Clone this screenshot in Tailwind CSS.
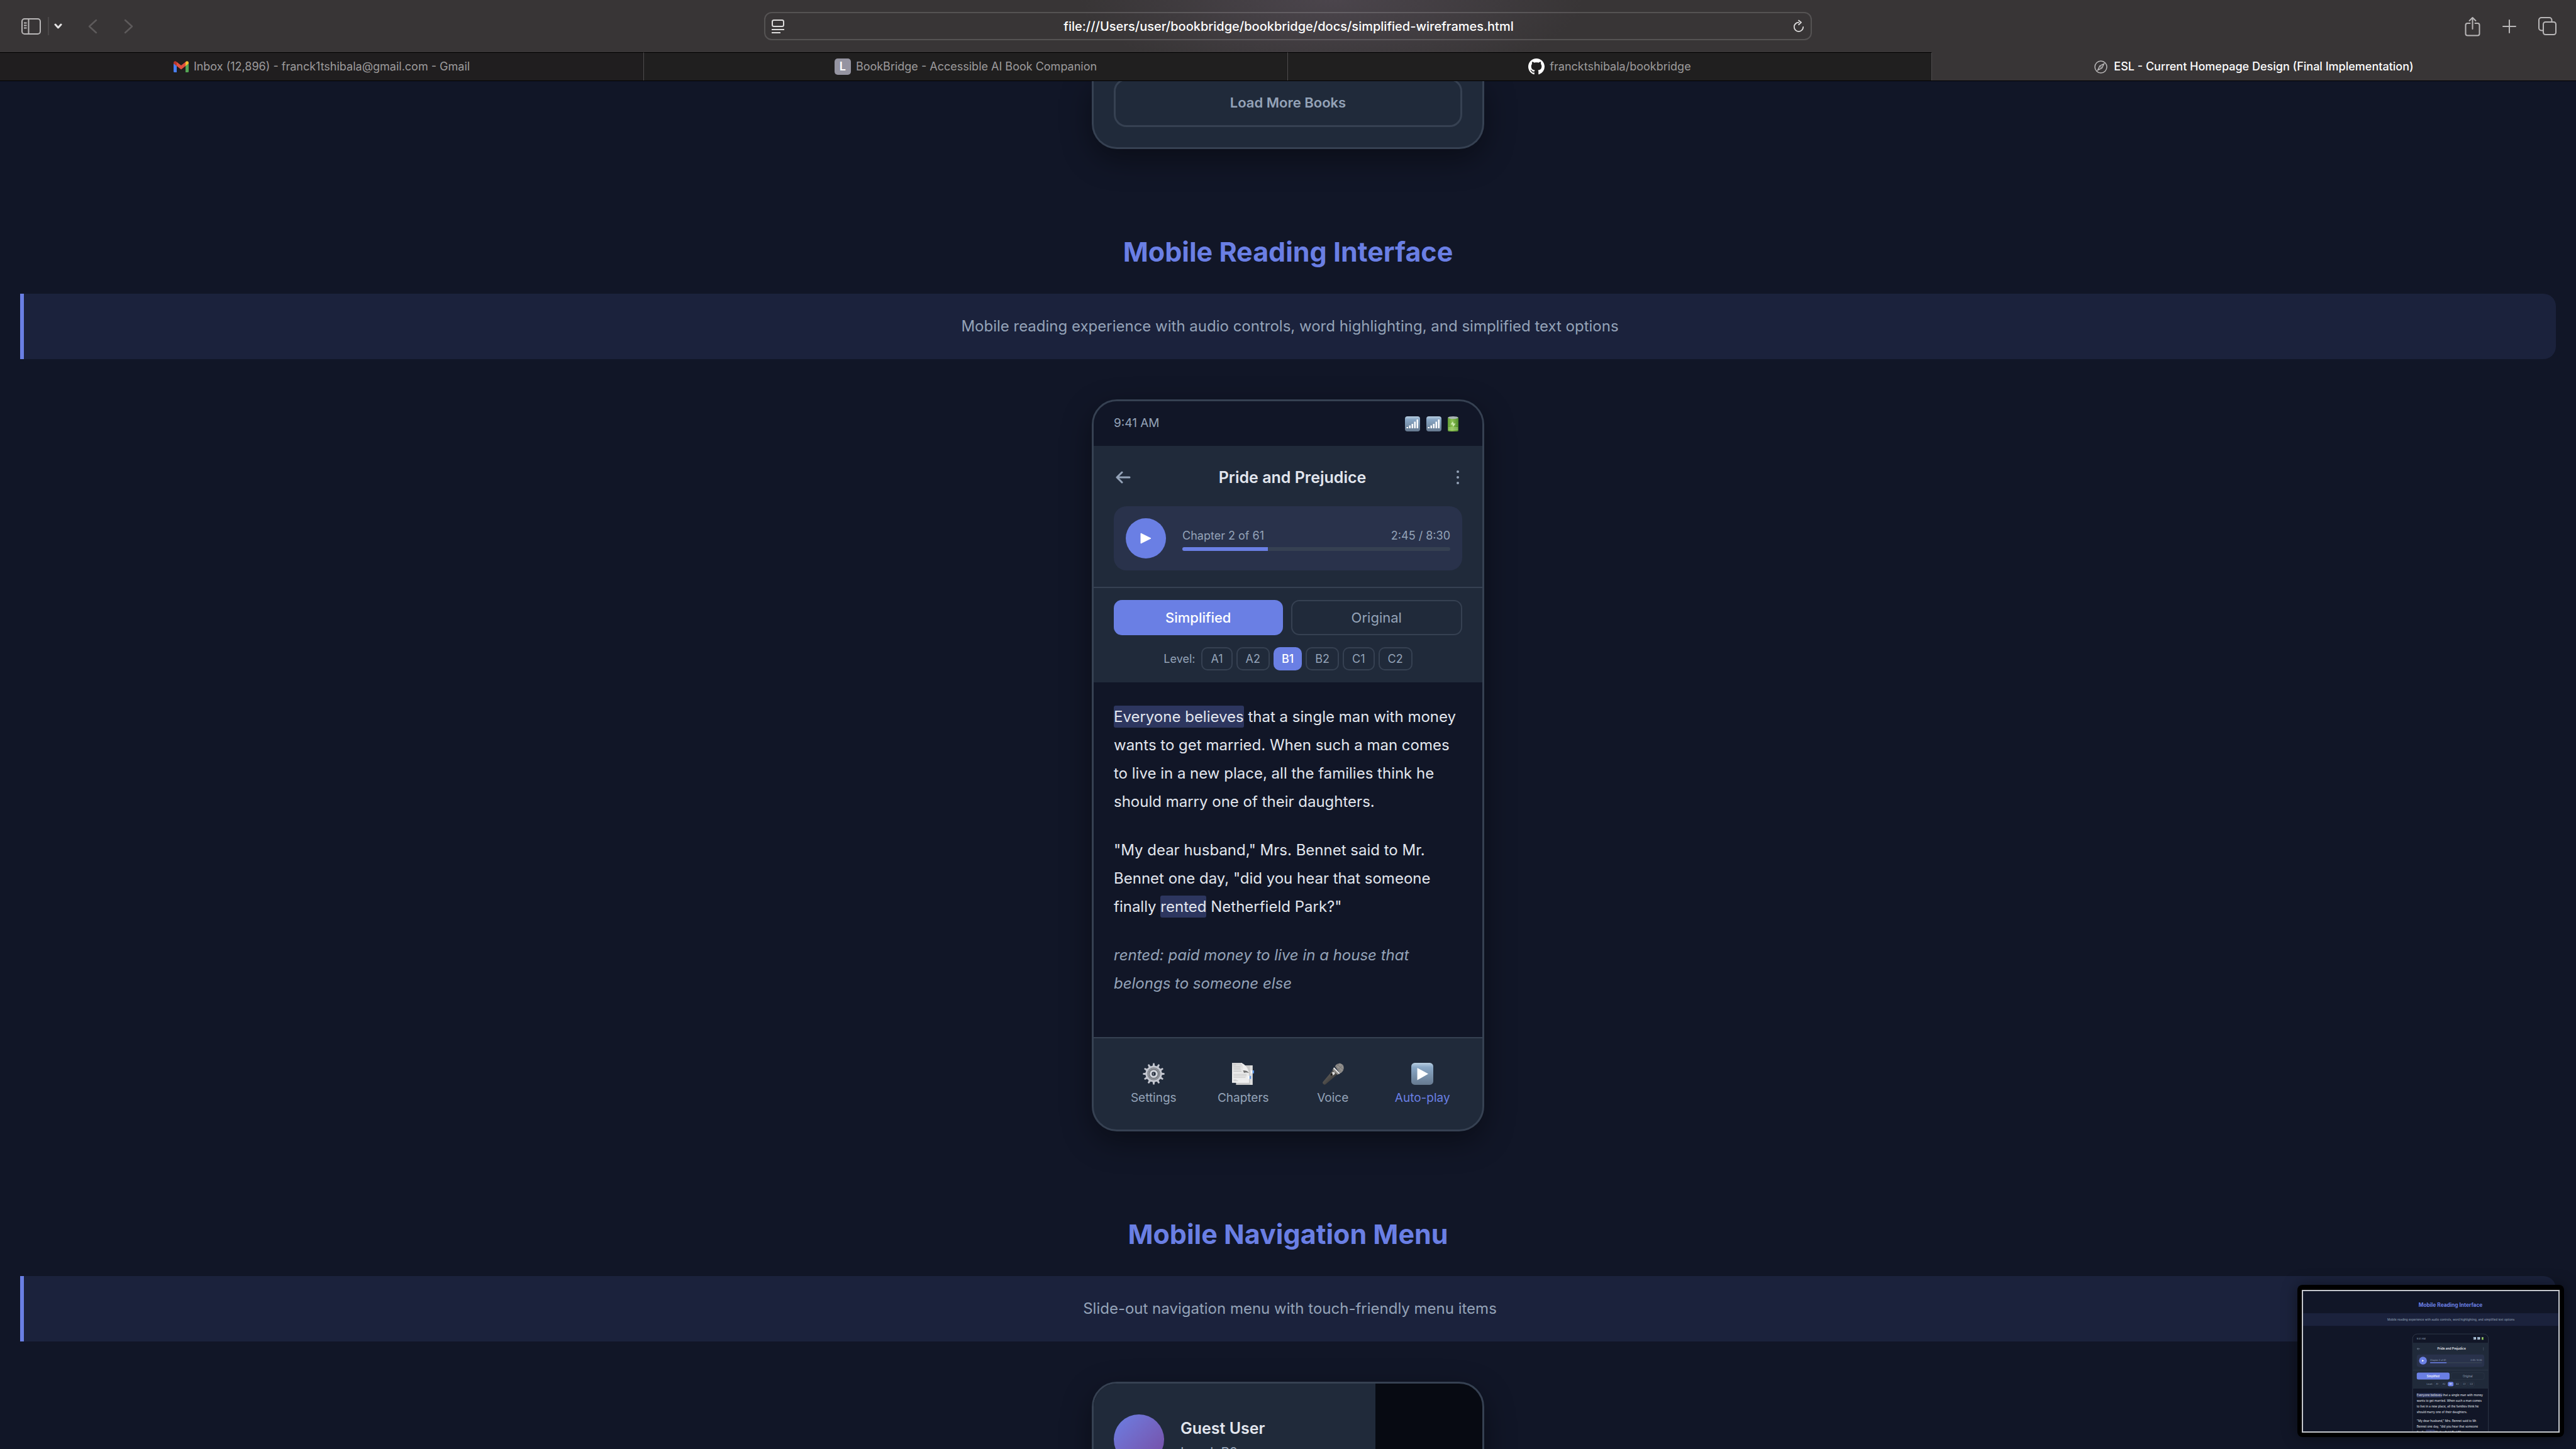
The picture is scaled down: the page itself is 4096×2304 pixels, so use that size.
<!DOCTYPE html>
<html lang="en">
<head>
<meta charset="utf-8">
<meta name="viewport" content="width=device-width, initial-scale=1">
<title>ESL - Current Homepage Design (Final Implementation)</title>
<script src="https://cdn.jsdelivr.net/npm/@tailwindcss/browser@4"></script>
</head>
<body class="flex h-screen flex-col overflow-hidden bg-[#111627] font-['Inter',sans-serif] text-[#e2e6ee]">

<!-- Shared drawings -->
<svg width="0" height="0" class="absolute" aria-hidden="true">
  <defs>
    <linearGradient id="tile" x1="0" y1="0" x2="0" y2="1">
      <stop offset="0" stop-color="#b9cfe2"/><stop offset=".2" stop-color="#8aa8c6"/><stop offset="1" stop-color="#66798f"/>
    </linearGradient>
    <linearGradient id="cell" x1="0" y1="0" x2="1" y2="0">
      <stop offset="0" stop-color="#5f9a35"/><stop offset=".4" stop-color="#8cc152"/><stop offset="1" stop-color="#4f8a2c"/>
    </linearGradient>
    <linearGradient id="paper" x1="0" y1="0" x2="0" y2="1">
      <stop offset="0" stop-color="#d4d4d4"/><stop offset=".3" stop-color="#e6e6e6"/><stop offset="1" stop-color="#f0f0f0"/>
    </linearGradient>
    <linearGradient id="handle" x1="0" y1="0" x2="1" y2="1">
      <stop offset="0" stop-color="#777470"/><stop offset="1" stop-color="#242322"/>
    </linearGradient>
    <symbol id="signal" viewBox="0 0 24 24">
      <rect width="24" height="24" rx="4" fill="url(#tile)"/>
      <path d="M2.500 17h2.500v2h-2.500zM6.500 14.500h2.500v4.500h-2.500zM10.500 12h2.500v7h-2.500zM14.500 8.500h2.500v10.500h-2.500zM18.500 5h2.500v14h-2.500z" fill="#fff"/>
    </symbol>
    <symbol id="battery" viewBox="0 0 17 24">
      <rect x="0" y="1" width="17" height="23" rx="2" fill="url(#cell)"/>
      <ellipse cx="8.500" cy="2" rx="8" ry="2" fill="#a9b3b5"/>
      <path d="M1 18.500h15M1 21h15" stroke="#b7dc8c" stroke-width="1"/>
      <path d="M8 8l-3.500 5h3l1 4 4-5.500h-3z" fill="#c9e6ac"/>
    </symbol>
  </defs>
</svg>

<!-- Browser chrome -->
<header class="shrink-0 bg-[#383536] bg-[radial-gradient(ellipse_400px_130px_at_51.700%_0px,#4b454c,#383536)]">
  <div class="grid h-[83px] grid-cols-[1fr_minmax(0,1666px)_1fr] items-center">
    <div class="flex items-center pl-[34px]">
      <button type="button" aria-label="Sidebar" class="block">
        <svg width="31" height="26" viewBox="0 0 31 26" fill="none" stroke="#b9b7b8" stroke-width="2"><rect x="1" y="1" width="29" height="24" rx="4"/><path d="M11.500 1v24M4 7.500h4.500M4 11.500h4.500M4 15.500h4.500"/></svg>
      </button>
      <span class="ml-[11px] h-[29px] w-[2px] bg-[#4a4748]"></span>
      <button type="button" aria-label="Tab groups" class="ml-2 block">
        <svg width="13" height="9" viewBox="0 0 13 9" fill="none" stroke="#e4e3e3" stroke-width="3" stroke-linecap="round" stroke-linejoin="round"><path d="M2 2l4.500 5L11 2"/></svg>
      </button>
      <button type="button" aria-label="Back" class="ml-[41px] block">
        <svg width="15" height="24" viewBox="0 0 15 24" fill="none" stroke="#5d5a5b" stroke-width="2.500" stroke-linecap="round" stroke-linejoin="round"><path d="M13 2L2 12l11 10"/></svg>
      </button>
      <button type="button" aria-label="Forward" class="ml-[42px] block">
        <svg width="15" height="24" viewBox="0 0 15 24" fill="none" stroke="#5d5a5b" stroke-width="2.500" stroke-linecap="round" stroke-linejoin="round"><path d="M2 2l11 10L2 22"/></svg>
      </button>
    </div>
    <div class="flex h-[45px] items-center rounded-xl border-2 border-white/15 px-[10px]">
      <button type="button" aria-label="Page menu" class="block">
        <svg width="20" height="22" viewBox="0 0 20 22" fill="none" stroke="#dddcdc" stroke-width="2"><rect x="1" y="1" width="18" height="10" rx="2.500"/><path d="M0 16h20M0 21h14"/></svg>
      </button>
      <input type="text" aria-label="Address" value="file:///Users/user/bookbridge/bookbridge/docs/simplified-wireframes.html" class="min-w-0 flex-1 bg-transparent text-center text-[20px] font-medium text-white outline-none">
      <button type="button" aria-label="Reload" class="block">
        <svg width="18" height="21" viewBox="0 0 20 22" fill="none" stroke="#dddcdc" stroke-width="2" stroke-linecap="round" stroke-linejoin="round"><path d="M10 4.500a8 8 0 1 0 8 8M10 1l4.500 3.500L10 8.500"/></svg>
      </button>
    </div>
    <div class="flex items-center justify-end gap-[35px] pr-[31px]">
      <button type="button" aria-label="Share" class="block">
        <svg width="25" height="32" viewBox="0 0 25 32" fill="none" stroke="#b9b7b8" stroke-width="2" stroke-linecap="round" stroke-linejoin="round"><path d="M8.500 11H4.500A3 3 0 0 0 1.500 14v13.500a3 3 0 0 0 3 3h16a3 3 0 0 0 3-3V14a3 3 0 0 0-3-3h-4M12.500 20V2.500M7.500 7l5-5 5 5"/></svg>
      </button>
      <button type="button" aria-label="New tab" class="block">
        <svg width="22" height="22" viewBox="0 0 22 22" fill="none" stroke="#b9b7b8" stroke-width="2" stroke-linecap="round"><path d="M11 1v20M1 11h20"/></svg>
      </button>
      <button type="button" aria-label="Tab overview" class="block">
        <svg width="29" height="29" viewBox="0 0 29 29" fill="none" stroke="#b9b7b8" stroke-width="2"><rect x="8" y="8" width="20" height="20" rx="3.500"/><path d="M8 21.500H5A4 4 0 0 1 1 17.500V5a4 4 0 0 1 4-4h12.500A4 4 0 0 1 21.500 5v3"/></svg>
      </button>
    </div>
  </div>
  <nav class="grid h-[46px] grid-cols-4 border-b border-black text-[18px] leading-6 text-[#9d9b9c]">
    <a href="#" class="flex items-center justify-center gap-2 border-t border-r border-t-black border-r-[#4e4c4d] bg-[#201e1f]">
      <svg width="24" height="18" viewBox="0 0 24 18"><path d="M0 4v12.500A1.500 1.500 0 0 0 1.500 18H5V7z" fill="#4a7ff0"/><path d="M24 4v12.500a1.500 1.500 0 0 1-1.500 1.500H19V7z" fill="#54a554"/><path d="M5 1.500l7 5.500 7-5.500V8l-7 5.500L5 8z" fill="#e0503f"/><path d="M19 1.500C21.500-.7 24 .5 24 3.500V4l-5 4z" fill="#f5bb2f"/><path d="M5 1.500C2.500-.7 0 .5 0 3.500V4l5 4z" fill="#b8362b"/></svg>
      <span>Inbox (12,896) - franck1tshibala@gmail.com - Gmail</span>
    </a>
    <a href="#" class="flex items-center justify-center gap-2 border-t border-r border-t-black border-r-[#4e4c4d] bg-[#201f1f]">
      <span class="grid size-[26px] place-items-center rounded-[5px] bg-[#9594a1] text-[18px] font-semibold text-white">L</span>
      <span>BookBridge - Accessible AI Book Companion</span>
    </a>
    <a href="#" class="flex items-center justify-center gap-2 border-t border-r border-t-black border-r-[#4e4c4d] bg-[#201f1f]">
      <svg width="26" height="26" viewBox="0 0 16 16" fill="#fff"><path d="M8 0C3.580 0 0 3.580 0 8c0 3.540 2.290 6.530 5.470 7.590.4.070.55-.17.55-.38 0-.19-.01-.82-.01-1.490-2.010.37-2.530-.49-2.690-.94-.09-.23-.48-.94-.82-1.130-.28-.15-.68-.52-.01-.53.63-.01 1.080.58 1.230.82.72 1.210 1.870.87 2.330.66.07-.52.28-.87.51-1.070-1.780-.2-3.640-.89-3.640-3.950 0-.87.31-1.590.82-2.150-.08-.2-.36-1.020.08-2.120 0 0 .67-.21 2.200.82.64-.18 1.320-.27 2-.27s1.360.09 2 .27c1.530-1.040 2.200-.82 2.200-.82.44 1.100.16 1.920.08 2.120.51.56.82 1.270.82 2.150 0 3.070-1.870 3.750-3.650 3.950.29.25.54.73.54 1.480 0 1.070-.01 1.930-.01 2.200 0 .21.15.46.55.38A8.010 8.010 0 0 0 16 8c0-4.420-3.580-8-8-8z"/></svg>
      <span>francktshibala/bookbridge</span>
    </a>
    <a href="#" aria-current="page" class="flex items-center justify-center gap-[10px] border-t border-transparent font-medium text-white">
      <svg width="21" height="21" viewBox="0 0 21 21" fill="none" stroke="#b9b7b8" stroke-width="1.500"><circle cx="10.500" cy="10.500" r="9.500"/><path d="M15.500 5.500l-3.300 6.700-6.700 3.300 3.300-6.700z"/><circle cx="10.500" cy="10.500" r="1" fill="#b9b7b8" stroke="none"/></svg>
      <span>ESL - Current Homepage Design (Final Implementation)</span>
    </a>
  </nav>
</header>

<main class="min-h-0 flex-1 overflow-hidden px-8">

  <!-- End of the library phone -->
  <section class="mx-auto w-[624px] rounded-b-[40px] border-x-3 border-b-3 border-[#364152] bg-[#202a3a] px-8 pb-8 shadow-[0_16px_48px_rgba(0,0,0,0.4)]">
    <button type="button" class="-mt-1 block h-[77px] w-full rounded-[20px] border-3 border-[#364152] text-[22px] font-semibold text-[#94a3b8]">Load More Books</button>
  </section>

  <!-- Mobile reading interface -->
  <section class="mt-[135px]">
    <h2 class="text-center text-[43px] leading-[56px] font-bold text-[#6a7fe4]">Mobile Reading Interface</h2>
    <p class="mt-[39px] flex h-[104px] items-center justify-center rounded-r-[20px] border-l-6 border-[#6a7fe4] bg-[#1b223c] text-[24px] text-[#94a3b8]">Mobile reading experience with audio controls, word highlighting, and simplified text options</p>

    <div class="mx-auto mt-16 w-[624px] overflow-hidden rounded-[40px] border-3 border-[#364152] bg-[#202a3a] shadow-[0_16px_48px_rgba(0,0,0,0.4)]">
      <div class="flex h-[71px] items-center justify-between bg-[#111627] px-8 text-[19px] text-[#94a3b8]">
        <span>9:41 AM</span>
        <span class="flex items-center gap-[10px] pr-[6px]">
          <svg width="24" height="24"><use href="#signal"/></svg>
          <svg width="24" height="24"><use href="#signal"/></svg>
          <svg width="17" height="24"><use href="#battery"/></svg>
        </span>
      </div>

      <div class="border-b-2 border-[#364152] px-8 pt-8 pb-[26px]">
        <div class="flex h-9 items-center justify-between">
          <button type="button" aria-label="Back to library" class="block w-[29px] pl-[3px]">
            <svg width="24" height="20" viewBox="0 0 24 20" fill="none" stroke="#94a3b8" stroke-width="3" stroke-linecap="round" stroke-linejoin="round"><path d="M10 2L2 10l8 8M2 10h20"/></svg>
          </button>
          <h3 class="text-[25px] leading-9 font-semibold">Pride and Prejudice</h3>
          <button type="button" aria-label="More" class="block w-[15px]">
            <svg width="15" height="24" viewBox="0 0 15 24" fill="#94a3b8"><circle cx="8" cy="3" r="2"/><circle cx="8" cy="12" r="2"/><circle cx="8" cy="21" r="2"/></svg>
          </button>
        </div>
        <div class="mt-7 flex h-[102px] items-center rounded-[20px] bg-[#29324b] px-[19px]">
          <button type="button" aria-label="Play" class="grid size-16 shrink-0 place-items-center rounded-full bg-[#6a7fe4]">
            <svg width="18" height="18" viewBox="0 0 18 18" fill="#fff" stroke="#fff" stroke-width="1" stroke-linejoin="round"><path d="M1 1v16L17 9z"/></svg>
          </button>
          <div class="ml-[26px] flex-1 pt-1">
            <div class="flex justify-between text-[18px] leading-6 text-[#94a3b8]"><span>Chapter 2 of 61</span><span>2:45 / 8:30</span></div>
            <div class="mt-[6px] h-[6px] overflow-hidden rounded-full bg-[#364152]"><div class="h-full bg-[#6a7fe4]" style="width:32%"></div></div>
          </div>
        </div>
      </div>

      <div class="px-8 py-[19px]">
        <div class="flex gap-[13px] text-[22px]">
          <button type="button" class="h-14 flex-1 rounded-[13px] bg-[#6a7fe4] font-medium text-white">Simplified</button>
          <button type="button" class="h-14 flex-1 rounded-[13px] border-2 border-[#364152] text-[#94a3b8]">Original</button>
        </div>
        <div class="mt-[19px] flex h-[37px] items-stretch justify-center gap-[6px] text-[18px] text-[#94a3b8]">
          <span class="mr-1 leading-[37px]">Level:</span>
          <button type="button" class="rounded-[10px] border-2 border-[#364152] px-[13px]">A1</button>
          <button type="button" class="rounded-[10px] border-2 border-[#364152] px-[13px]">A2</button>
          <button type="button" class="rounded-[10px] bg-[#6a7fe4] px-[13px] font-medium text-white">B1</button>
          <button type="button" class="rounded-[10px] border-2 border-[#364152] px-[13px]">B2</button>
          <button type="button" class="rounded-[10px] border-2 border-[#364152] px-[13px]">C1</button>
          <button type="button" class="rounded-[10px] border-2 border-[#364152] px-[13px]">C2</button>
        </div>
      </div>

      <article class="flex flex-col gap-8 bg-[#111627] px-8 pt-8 pb-[63px] text-[24px] leading-[45px] whitespace-nowrap">
        <p><mark class="rounded-[3px] bg-[#2d365f] py-[3px] text-inherit">Everyone believes</mark> that a single man with money<br>wants to get married. When such a man comes<br>to live in a new place, all the families think he<br>should marry one of their daughters.</p>
        <p>"My dear husband," Mrs. Bennet said to Mr.<br>Bennet one day, "did you hear that someone<br>finally <mark class="rounded-[3px] bg-[#2d365f] py-[3px] text-inherit">rented</mark> Netherfield Park?"</p>
        <p class="text-[#94a3b8] italic">rented: paid money to live in a house that<br>belongs to someone else</p>
      </article>

      <nav class="grid grid-cols-4 border-t-2 border-[#364152] px-6 pt-[39px] pb-[38px] text-[19px] leading-6 text-[#94a3b8]">
        <a href="#" class="flex flex-col items-center gap-[9px]">
          <svg width="35" height="35" viewBox="0 0 44 44">
            <defs><path id="tooth" d="M19.500 8l1-7.500h3l1 7.500z"/></defs>
            <g fill="#c3c6cf"><use href="#tooth"/><use href="#tooth" transform="rotate(30 22 22)"/><use href="#tooth" transform="rotate(60 22 22)"/><use href="#tooth" transform="rotate(90 22 22)"/><use href="#tooth" transform="rotate(120 22 22)"/><use href="#tooth" transform="rotate(150 22 22)"/><use href="#tooth" transform="rotate(180 22 22)"/><use href="#tooth" transform="rotate(210 22 22)"/><use href="#tooth" transform="rotate(240 22 22)"/><use href="#tooth" transform="rotate(270 22 22)"/><use href="#tooth" transform="rotate(300 22 22)"/><use href="#tooth" transform="rotate(330 22 22)"/><circle cx="22" cy="22" r="16.500"/></g>
            <circle cx="22" cy="22" r="13" fill="#83878f"/><circle cx="22" cy="22" r="10.500" fill="#70747b" stroke="#a7abb2" stroke-width="1"/>
            <circle cx="22" cy="22" r="6" fill="#202a3a" stroke="#d3d6de" stroke-width="4"/>
            <path d="M19 22l3 3.500 1-7z" fill="#787c84"/>
          </svg>Settings
        </a>
        <a href="#" class="flex flex-col items-center gap-[9px]">
          <svg width="35" height="35" viewBox="0 0 44 44">
            <path d="M8 5h33v39H8z" fill="#c9c9c9"/><path d="M36 5h5v39h-5z" fill="#dedede"/>
            <path d="M0 0h20c2 4 2 8 3 12l11 6v22H0z" fill="url(#paper)"/>
            <path d="M3 4h5M3 8h14M3 11h14M3 14h15M3 17h16M3 23h26M3 26h26M3 29h24M3 34h6M3 36h9" stroke="#bcbcbc" stroke-width="1"/>
            <path d="M17 0c7 1 15 9 17 20-3-4-7-5-12-5 1-6-1-12-5-15z" fill="#eeeeee"/>
            <path d="M22 15c5 0 9 1 12 5-4-1-8-1-10 0z" fill="#6f6f6f"/>
            <path d="M38 15h3v6h-3zM32 26h3v6h-3z" fill="#fff"/><path d="M41 15h3v6h-3zM35 26h3v6h-3z" fill="#5b95e6"/>
          </svg>Chapters
        </a>
        <a href="#" class="flex flex-col items-center gap-[9px]">
          <svg width="35" height="35" viewBox="0 0 44 44">
            <path d="M24 12l9 9L7 43c-3 2-7-2-5-5z" fill="url(#handle)"/>
            <path d="M24 9l12 12-5 3-10-10z" fill="#8d8a87"/>
            <path d="M23.500 10l11.500 11.500" stroke="#e8e8e8" stroke-width="2.500"/>
            <path d="M26 7C31-2 44 0 43.500 10c0 5-3 9-7 11z" fill="#918f8d"/>
            <path d="M30 3l13 11M27 7l12 11M36 0l-9 9M42 4L31 15" stroke="#6d6b69" stroke-width="1"/>
            <path d="M20 19l5-1 1 4-4 3z" fill="#dcdcdc"/><path d="M17 22l3-1 1 3-3 2z" fill="#1c1b1a"/>
          </svg>Voice
        </a>
        <a href="#" class="flex flex-col items-center gap-[9px] text-[#6a7fe4]">
          <svg width="35" height="35" viewBox="0 0 44 44"><rect width="44" height="44" rx="7" fill="url(#tile)"/><path d="M12 10v24.500L34 22z" fill="#fff"/></svg>Auto-play
        </a>
      </nav>
    </div>
  </section>

  <!-- Mobile navigation menu -->
  <section class="mt-[135px]">
    <h2 class="text-center text-[43px] leading-[56px] font-bold text-[#6a7fe4]">Mobile Navigation Menu</h2>
    <p class="mt-[39px] flex h-[104px] items-center justify-center rounded-r-[20px] border-l-6 border-[#6a7fe4] bg-[#1b223c] text-[24px] text-[#94a3b8]">Slide-out navigation menu with touch-friendly menu items</p>

    <div class="mx-auto mt-16 h-[800px] w-[624px] overflow-hidden rounded-[40px] border-3 border-[#364152] bg-[#070a12] shadow-[0_16px_48px_rgba(0,0,0,0.4)]">
      <div class="h-full w-[448px] bg-[#202a3a] px-8 pt-[49px]">
        <div class="flex gap-[26px]">
          <span class="size-20 rounded-full bg-linear-135 from-[#6a7fe4] to-[#764ba2]"></span>
          <div class="pt-[5px]">
            <h3 class="text-[25px] leading-[34px] font-semibold">Guest User</h3>
            <p class="mt-2 text-[21px] leading-7 text-[#94a3b8]">Level: B2</p>
          </div>
        </div>
      </div>
    </div>
  </section>
</main>

<!-- Floating screenshot preview -->
<aside class="fixed right-[19px] bottom-[19px] rounded-lg bg-black px-[7px] pt-2 pb-[7px] shadow-[0_0_24px_rgba(0,0,0,0.4)]">
  <svg class="block border-2 border-[#c4c6cb] bg-[#111627]" width="410" height="227" viewBox="839 286 2093 1155" preserveAspectRatio="xMinYMin slice" font-family="Inter, sans-serif" aria-label="Screenshot preview">
    <text x="2048" y="416" font-size="43" font-weight="700" fill="#6a7fe4" text-anchor="middle">Mobile Reading Interface</text>
    <rect x="839" y="467" width="2093" height="104" fill="#1b223c"/>
    <text x="2051" y="528" font-size="24" fill="#94a3b8" text-anchor="middle">Mobile reading experience with audio controls, word highlighting, and simplified text options</text>
    <rect x="1737" y="637" width="621" height="1160" rx="38" fill="#111627" stroke="#364152" stroke-width="4"/>
    <rect x="1739" y="709" width="618" height="376" fill="#202a3a"/>
    <rect x="1739" y="932" width="618" height="3" fill="#364152"/>
    <text x="1771" y="681" font-size="19" fill="#94a3b8">9:41 AM</text>
    <use href="#signal" x="2234" y="662" width="24" height="24"/><use href="#signal" x="2267" y="662" width="24" height="24"/><use href="#battery" x="2302" y="662" width="17" height="24"/>
    <path d="M1784 750l-9 9 9 9M1775 759h22" fill="none" stroke="#94a3b8" stroke-width="3"/>
    <circle cx="2318" cy="750" r="2" fill="#94a3b8"/><circle cx="2318" cy="759" r="2" fill="#94a3b8"/><circle cx="2318" cy="768" r="2" fill="#94a3b8"/>
    <text x="2056" y="768" font-size="25" font-weight="600" fill="#e2e6ee" text-anchor="middle">Pride and Prejudice</text>
    <rect x="1771" y="805" width="554" height="102" rx="20" fill="#29324b"/>
    <circle cx="1822" cy="856" r="32" fill="#6a7fe4"/><path d="M1814 848v17l17-8z" fill="#fff"/>
    <rect x="1880" y="869" width="425" height="7" rx="3" fill="#364152"/><rect x="1880" y="869" width="136" height="7" rx="3" fill="#6a7fe4"/>
    <g font-size="18" fill="#94a3b8"><text x="1880" y="857">Chapter 2 of 61</text><text x="2305" y="857" text-anchor="end">2:45 / 8:30</text></g>
    <rect x="1771" y="954" width="269" height="56" rx="13" fill="#6a7fe4"/><rect x="2054" y="955" width="270" height="54" rx="13" fill="none" stroke="#364152" stroke-width="2"/>
    <g font-size="22" text-anchor="middle"><text x="1905" y="990" font-weight="500" fill="#fff">Simplified</text><text x="2189" y="990" fill="#94a3b8">Original</text></g>
    <g fill="none" stroke="#364152" stroke-width="2"><rect x="1915" y="1030" width="46" height="35" rx="10"/><rect x="1970" y="1030" width="49" height="35" rx="10"/><rect x="2080" y="1030" width="49" height="35" rx="10"/><rect x="2137" y="1030" width="48" height="35" rx="10"/><rect x="2193" y="1030" width="51" height="35" rx="10"/></g>
    <rect x="2026" y="1029" width="46" height="37" rx="10" fill="#6a7fe4"/>
    <g font-size="18" fill="#94a3b8" text-anchor="middle"><text x="1877" y="1055">Level:</text><text x="1938" y="1055">A1</text><text x="1994" y="1055">A2</text><text x="2049" y="1055" fill="#fff" font-weight="500">B1</text><text x="2105" y="1055">B2</text><text x="2161" y="1055">C1</text><text x="2219" y="1055">C2</text></g>
    <rect x="1771" y="1122" width="208" height="35" rx="3" fill="#2d365f"/><rect x="1846" y="1422" width="72" height="35" rx="3" fill="#2d365f"/>
    <g font-size="24" fill="#e2e6ee">
      <text x="1771" y="1149">Everyone believes that a single man with money</text>
      <text x="1771" y="1194">wants to get married. When such a man comes</text>
      <text x="1771" y="1239">to live in a new place, all the families think he</text>
      <text x="1771" y="1284">should marry one of their daughters.</text>
      <text x="1771" y="1360">"My dear husband," Mrs. Bennet said to Mr.</text>
      <text x="1771" y="1405">Bennet one day, "did you hear that someone</text>
      <text x="1771" y="1450">finally rented Netherfield Park?"</text>
    </g>
  </svg>
</aside>
</body>
</html>
